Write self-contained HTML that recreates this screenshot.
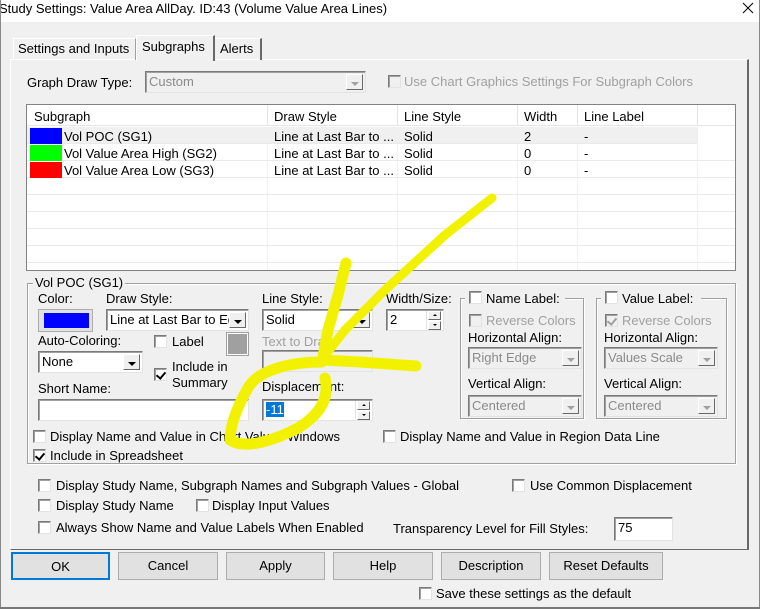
<!DOCTYPE html>
<html><head><style>
*{box-sizing:border-box;margin:0;padding:0}
body{width:760px;height:609px;position:relative;background:#f0f0f0;font-family:"Liberation Sans",Arial,sans-serif;font-size:13px;color:#000;overflow:hidden}
.a{position:absolute;white-space:nowrap}
.t{position:absolute;white-space:nowrap;line-height:15px}
.g{color:#a0a0a0}
.edit{position:absolute;background:#fff;border:1px solid #7a7a7a;border-right-color:#e3e3e3;border-bottom-color:#e3e3e3;box-shadow:inset 1px 1px 0 #a0a0a0;padding:2px 3px;line-height:16px}
.dis{background:#f0f0f0;color:#8a8a8a}
.dd{position:absolute;top:2px;right:2px;bottom:2px;width:17px;background:#f0f0f0;border:1px solid #fff;border-right-color:#696969;border-bottom-color:#696969}
.dd:after{content:"";position:absolute;left:4px;top:7px;border-left:4px solid transparent;border-right:4px solid transparent;border-top:4px solid #000}
.dd.gr:after{border-top-color:#a0a0a0}
.cb{position:absolute;width:13px;height:13px;background:#fff;border:1px solid #7a7a7a;border-right-color:#e3e3e3;border-bottom-color:#e3e3e3;box-shadow:inset 1px 1px 0 #a0a0a0}
.cb.d{background:#f0f0f0}
.cb.k:after{content:"";position:absolute;left:3px;top:1px;width:4px;height:7px;border:solid #000;border-width:0 2px 2px 0;transform:rotate(40deg)}
.cb.d.k:after{border-color:#a0a0a0}
.btn{position:absolute;height:28px;top:552px;background:#e1e1e1;border:1px solid #adadad;text-align:center;line-height:26px}
.grp{position:absolute;border:1px solid #a0a0a0;box-shadow:1px 1px 0 #fff, inset 1px 1px 0 #fff}
.spin{position:absolute;right:1px;top:1px;bottom:1px;width:16px;border-left:1px solid #e3e3e3}
.spin i{position:absolute;left:1px;width:13px;height:9px;background:#f0f0f0;border:1px solid #fff;border-right-color:#696969;border-bottom-color:#696969}
.spin i:after{content:"";position:absolute;left:4px;top:2px;border-left:2px solid transparent;border-right:2px solid transparent}
.spin i.u:after{border-bottom:2px solid #000}
.spin i.dn:after{border-top:2px solid #000}
.row{position:absolute;left:27px;width:708px;height:17px;border-bottom:1px solid #eaeaea}
</style></head><body>
<div class="a" style="left:0;top:0;width:760px;height:22px;background:#fff"></div>
<div class="t" style="left:-1px;top:1px">Study Settings: Value Area AllDay. ID:43 (Volume Value Area Lines)</div>
<svg class="a" style="left:742px;top:2px" width="12" height="12"><path d="M1 1L11 11M11 1L1 11" stroke="#000" stroke-width="1"/></svg>
<div class="a" style="left:0;top:0;width:1px;height:609px;background:#888"></div>
<div class="a" style="left:759px;top:0;width:1px;height:609px;background:#888"></div>
<div class="a" style="left:0;top:607px;width:760px;height:2px;background:#777"></div>

<div class="a" style="left:10px;top:59px;width:739px;height:491px;border:1px solid #fff;border-right:2px solid #696969;border-bottom:1px solid #696969;background:#f0f0f0"></div>
<div class="a" style="left:13px;top:38px;width:123px;height:22px;border:1px solid #fff;border-bottom:none;border-right:1px solid #a0a0a0"></div>
<div class="t" style="left:18px;top:41px">Settings and Inputs</div>
<div class="a" style="left:136px;top:35px;width:79px;height:26px;border:1px solid #fff;border-bottom:none;border-right:2px solid #696969;background:#f0f0f0"></div>
<div class="t" style="left:142px;top:39px">Subgraphs</div>
<div class="a" style="left:215px;top:38px;width:47px;height:22px;border-top:1px solid #fff;border-right:2px solid #696969"></div>
<div class="t" style="left:220px;top:41px">Alerts</div>

<div class="t" style="left:27px;top:75px">Graph Draw Type:</div>
<div class="edit dis" style="left:145px;top:71px;width:221px;height:22px">Custom<div class="dd gr"></div></div>
<div class="cb d" style="left:388px;top:75px"></div>
<div class="t g" style="left:404px;top:74px">Use Chart Graphics Settings For Subgraph Colors</div>

<div class="a" style="left:26px;top:104px;width:710px;height:167px;background:#fff;border:1px solid #828282"></div>
<div class="a" style="left:27px;top:105px;width:708px;height:21px;background:#fff;border-bottom:1px solid #e5e5e5"></div>
<div class="a" style="left:267px;top:105px;width:1px;height:21px;background:#e5e5e5"></div>
<div class="a" style="left:397px;top:105px;width:1px;height:21px;background:#e5e5e5"></div>
<div class="a" style="left:517px;top:105px;width:1px;height:21px;background:#e5e5e5"></div>
<div class="a" style="left:577px;top:105px;width:1px;height:21px;background:#e5e5e5"></div>
<div class="a" style="left:697px;top:105px;width:1px;height:21px;background:#e5e5e5"></div>
<div class="t" style="left:34px;top:109px">Subgraph</div>
<div class="t" style="left:274px;top:109px">Draw Style</div>
<div class="t" style="left:404px;top:109px">Line Style</div>
<div class="t" style="left:524px;top:109px">Width</div>
<div class="t" style="left:584px;top:109px">Line Label</div>
<div class="a" style="left:267px;top:127px;width:1px;height:143px;background:#f0f0f0"></div>
<div class="a" style="left:397px;top:127px;width:1px;height:143px;background:#f0f0f0"></div>
<div class="a" style="left:517px;top:127px;width:1px;height:143px;background:#f0f0f0"></div>
<div class="a" style="left:577px;top:127px;width:1px;height:143px;background:#f0f0f0"></div>
<div class="a" style="left:697px;top:127px;width:1px;height:143px;background:#f0f0f0"></div>
<div class="row" style="top:127px;background:#f0f0f0;width:670px"></div>
<div class="row" style="top:144px"></div>
<div class="row" style="top:161px"></div>
<div class="row" style="top:178px"></div><div class="row" style="top:195px"></div><div class="row" style="top:212px"></div><div class="row" style="top:229px"></div><div class="row" style="top:246px"></div>
<div class="a" style="left:30px;top:128px;width:32px;height:16px;background:#0000ff"></div>
<div class="a" style="left:30px;top:145px;width:32px;height:16px;background:#00ff00"></div>
<div class="a" style="left:30px;top:162px;width:32px;height:16px;background:#ff0000"></div>
<div class="t" style="left:64px;top:129px">Vol POC (SG1)</div>
<div class="t" style="left:64px;top:146px">Vol Value Area High (SG2)</div>
<div class="t" style="left:64px;top:163px">Vol Value Area Low (SG3)</div>
<div class="t" style="left:274px;top:129px">Line at Last Bar to ...</div>
<div class="t" style="left:274px;top:146px">Line at Last Bar to ...</div>
<div class="t" style="left:274px;top:163px">Line at Last Bar to ...</div>
<div class="t" style="left:404px;top:129px">Solid</div><div class="t" style="left:404px;top:146px">Solid</div><div class="t" style="left:404px;top:163px">Solid</div>
<div class="t" style="left:524px;top:129px">2</div><div class="t" style="left:524px;top:146px">0</div><div class="t" style="left:524px;top:163px">0</div>
<div class="t" style="left:584px;top:129px">-</div><div class="t" style="left:584px;top:146px">-</div><div class="t" style="left:584px;top:163px">-</div>

<div class="grp" style="left:27px;top:283px;width:709px;height:181px"></div>
<div class="t" style="left:33px;top:275px;background:#f0f0f0;padding:0 2px">Vol POC (SG1)</div>
<div class="t" style="left:38px;top:291px">Color:</div>
<div class="a" style="left:38px;top:309px;width:55px;height:23px;background:#e1e1e1;border:1px solid #adadad"><div class="a" style="left:5px;top:3px;width:45px;height:15px;background:#0000ff"></div></div>
<div class="t" style="left:106px;top:291px">Draw Style:</div>
<div class="edit" style="left:106px;top:309px;width:143px;height:22px;overflow:hidden">Line at Last Bar to Ed<div class="dd"></div></div>
<div class="t" style="left:262px;top:291px">Line Style:</div>
<div class="edit" style="left:262px;top:309px;width:111px;height:22px">Solid<div class="dd"></div></div>
<div class="t" style="left:386px;top:291px">Width/Size:</div>
<div class="edit" style="left:386px;top:309px;width:58px;height:22px">2<div class="spin"><i class="u" style="top:0"></i><i class="dn" style="top:10px"></i></div></div>
<div class="t" style="left:38px;top:333px">Auto-Coloring:</div>
<div class="edit" style="left:38px;top:351px;width:105px;height:22px">None<div class="dd"></div></div>
<div class="cb" style="left:154px;top:335px"></div>
<div class="t" style="left:172px;top:334px">Label</div>
<div class="a" style="left:227px;top:333px;width:21px;height:22px;background:#a0a0a0;border:1px solid #fff;outline:1px solid #a0a0a0"></div>
<div class="cb k" style="left:154px;top:368px"></div>
<div class="t" style="left:172px;top:359px">Include in</div>
<div class="t" style="left:172px;top:375px">Summary</div>
<div class="t g" style="left:262px;top:334px">Text to Draw:</div>
<div class="edit dis" style="left:262px;top:350px;width:111px;height:22px"></div>
<div class="t" style="left:38px;top:381px">Short Name:</div>
<div class="edit" style="left:38px;top:399px;width:211px;height:22px"></div>
<div class="t" style="left:262px;top:379px">Displacement:</div>
<div class="edit" style="left:262px;top:399px;width:111px;height:22px"><span style="background:#0078d7;color:#fff">-11</span><div class="spin"><i class="u" style="top:0"></i><i class="dn" style="top:10px"></i></div></div>
<div class="cb" style="left:33px;top:430px"></div>
<div class="t" style="left:50px;top:429px">Display Name and Value in Chart Values Windows</div>
<div class="cb" style="left:383px;top:430px"></div>
<div class="t" style="left:400px;top:429px">Display Name and Value in Region Data Line</div>
<div class="cb k" style="left:33px;top:449px"></div>
<div class="t" style="left:50px;top:448px">Include in Spreadsheet</div>

<div class="grp" style="left:460px;top:298px;width:124px;height:121px"></div>
<div class="a" style="left:465px;top:290px;width:100px;height:16px;background:#f0f0f0"></div>
<div class="cb" style="left:469px;top:291px"></div>
<div class="t" style="left:486px;top:291px">Name Label:</div>
<div class="cb d" style="left:469px;top:314px"></div>
<div class="t g" style="left:486px;top:313px">Reverse Colors</div>
<div class="t" style="left:468px;top:330px">Horizontal Align:</div>
<div class="edit dis" style="left:468px;top:347px;width:114px;height:22px">Right Edge<div class="dd gr"></div></div>
<div class="t" style="left:468px;top:376px">Vertical Align:</div>
<div class="edit dis" style="left:468px;top:395px;width:114px;height:22px">Centered<div class="dd gr"></div></div>
<div class="grp" style="left:596px;top:298px;width:131px;height:121px"></div>
<div class="a" style="left:601px;top:290px;width:100px;height:16px;background:#f0f0f0"></div>
<div class="cb" style="left:605px;top:291px"></div>
<div class="t" style="left:622px;top:291px">Value Label:</div>
<div class="cb d k" style="left:605px;top:314px"></div>
<div class="t g" style="left:622px;top:313px">Reverse Colors</div>
<div class="t" style="left:604px;top:330px">Horizontal Align:</div>
<div class="edit dis" style="left:604px;top:347px;width:114px;height:22px">Values Scale<div class="dd gr"></div></div>
<div class="t" style="left:604px;top:376px">Vertical Align:</div>
<div class="edit dis" style="left:604px;top:395px;width:114px;height:22px">Centered<div class="dd gr"></div></div>

<div class="cb" style="left:38px;top:479px"></div>
<div class="t" style="left:56px;top:478px">Display Study Name, Subgraph Names and Subgraph Values - Global</div>
<div class="cb" style="left:512px;top:479px"></div>
<div class="t" style="left:530px;top:478px">Use Common Displacement</div>
<div class="cb" style="left:38px;top:499px"></div>
<div class="t" style="left:56px;top:498px">Display Study Name</div>
<div class="cb" style="left:196px;top:499px"></div>
<div class="t" style="left:212px;top:498px">Display Input Values</div>
<div class="cb" style="left:38px;top:521px"></div>
<div class="t" style="left:56px;top:520px">Always Show Name and Value Labels When Enabled</div>
<div class="t" style="left:393px;top:521px">Transparency Level for Fill Styles:</div>
<div class="edit" style="left:614px;top:517px;width:59px;height:24px">75</div>

<div class="btn" style="left:11px;width:99px;border:2px solid #0078d7;background:#e1e1e1">OK</div>
<div class="btn" style="left:118px;width:100px">Cancel</div>
<div class="btn" style="left:226px;width:99px">Apply</div>
<div class="btn" style="left:333px;width:100px">Help</div>
<div class="btn" style="left:441px;width:100px">Description</div>
<div class="btn" style="left:549px;width:114px">Reset Defaults</div>
<div class="cb" style="left:419px;top:587px"></div>
<div class="t" style="left:436px;top:586px">Save these settings as the default</div>

<svg class="a" style="left:0;top:0" width="760" height="609">
<g fill="none" stroke="#f2f200" stroke-width="11" stroke-linecap="round" stroke-linejoin="round">
<path d="M492 198 L445 235 L385 290 L345 330 L323 358" stroke-width="9"/>
<path d="M323 360 L360 362 L416 366"/>
<path d="M346 263 L338 295 L328 330 L322 362 C290 362 258 370 248 388 C238 405 230 425 230 440 C245 450 275 440 298 428 C318 416 330 400 325 378"/>
</g>
</svg>
</body></html>
